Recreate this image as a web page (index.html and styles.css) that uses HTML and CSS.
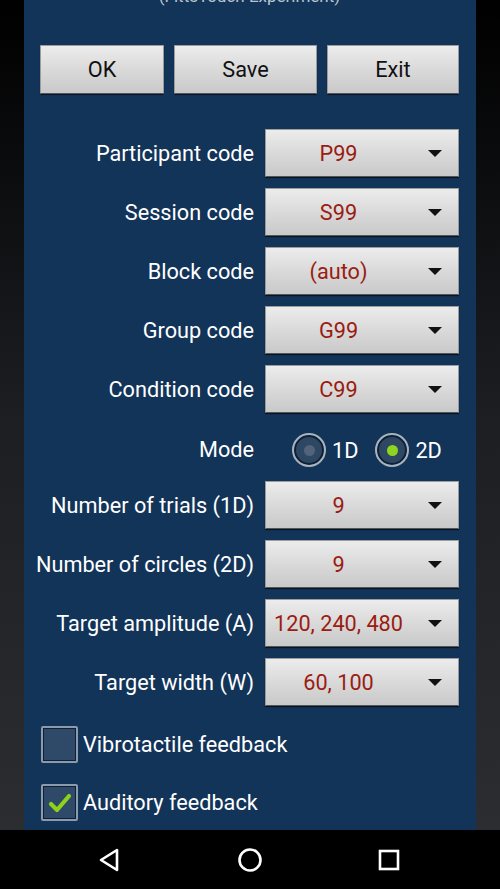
FILE: index.html
```html
<!DOCTYPE html>
<html lang="en">
<head>
    <meta charset="UTF-8">
    <meta name="viewport" content="width=device-width, initial-scale=1.0">
    <title>FittsTouch Setup</title>
    <link rel="stylesheet" href="styles.css">
</head>
<body>

<div class="screen">
    <div class="panel">
        <div class="title">(FittsTouch Experiment)</div>

        <div class="buttons">
            <button class="btn">OK</button>
            <button class="btn">Save</button>
            <button class="btn">Exit</button>
        </div>

        <div class="form">
            <div class="row">
                <span class="label">Participant code</span>
                <div class="spinner"><span class="value">P99</span><span class="arrow"></span></div>
            </div>
            <div class="row">
                <span class="label">Session code</span>
                <div class="spinner"><span class="value">S99</span><span class="arrow"></span></div>
            </div>
            <div class="row">
                <span class="label">Block code</span>
                <div class="spinner"><span class="value">(auto)</span><span class="arrow"></span></div>
            </div>
            <div class="row">
                <span class="label">Group code</span>
                <div class="spinner"><span class="value">G99</span><span class="arrow"></span></div>
            </div>
            <div class="row">
                <span class="label">Condition code</span>
                <div class="spinner"><span class="value">C99</span><span class="arrow"></span></div>
            </div>
            <div class="row mode-row">
                <span class="label">Mode</span>
                <div class="radios">
                    <label class="radio"><span class="ring"><span class="dot"></span></span>1D</label>
                    <label class="radio checked"><span class="ring"><span class="dot"></span></span>2D</label>
                </div>
            </div>
            <div class="row">
                <span class="label">Number of trials (1D)</span>
                <div class="spinner"><span class="value">9</span><span class="arrow"></span></div>
            </div>
            <div class="row">
                <span class="label">Number of circles (2D)</span>
                <div class="spinner"><span class="value">9</span><span class="arrow"></span></div>
            </div>
            <div class="row">
                <span class="label">Target amplitude (A)</span>
                <div class="spinner"><span class="value">120, 240, 480</span><span class="arrow"></span></div>
            </div>
            <div class="row">
                <span class="label">Target width (W)</span>
                <div class="spinner"><span class="value">60, 100</span><span class="arrow"></span></div>
            </div>
        </div>

        <div class="checks">
            <label class="check"><span class="box"></span>Vibrotactile feedback</label>
            <label class="check">
                <span class="box">
                    <svg width="26" height="26" viewBox="0 0 26 26"><path d="M4 14 L10 20 L22 6" fill="none" stroke="#8ed21c" stroke-width="4.2" stroke-linecap="round" stroke-linejoin="round"/></svg>
                </span>Auditory feedback
            </label>
        </div>
    </div>
</div>

<div class="navbar">
    <svg width="24" height="26" viewBox="0 0 24 26"><path d="M19 3 L19 23 L3 13 Z" fill="none" stroke="#fff" stroke-width="2.6" stroke-linejoin="round"/></svg>
    <svg width="26" height="26" viewBox="0 0 26 26"><circle cx="13" cy="13" r="10.5" fill="none" stroke="#fff" stroke-width="2.6"/></svg>
    <svg width="24" height="24" viewBox="0 0 24 24"><rect x="3" y="3" width="18" height="18" fill="none" stroke="#fff" stroke-width="2.6"/></svg>
</div>

</body>
</html>
```

FILE: styles.css
```css
body {
    margin: 0;
    font-family: Roboto, "Noto Sans", sans-serif;
    background: #000;
    overflow: hidden;
}
.screen {
    height: 830px;
    overflow: hidden;
    background: linear-gradient(to bottom, #000 0%, #1c1e22 50%, #2c2d30 100%);
}
.panel {
    width: 452px;
    height: 830px;
    margin: 0 24px;
    background: #133459;
    box-sizing: border-box;
    padding: 0 17px 0 16px;
    overflow: hidden;
}
.title {
    margin-top: -14px;
    height: 20px;
    line-height: 20px;
    text-align: center;
    color: #b9c3ce;
    font-size: 17px;
}
.buttons {
    display: grid;
    grid-template-columns: 124px 143px 132px;
    gap: 10px;
    margin-top: 39px;
}
.btn {
    height: 49px;
    font-family: Roboto, sans-serif;
    font-size: 21.7px;
    color: #111;
    border: 1px solid #9c9c9c;
    border-bottom-color: #555;
    border-radius: 1px;
    background: linear-gradient(to bottom, #ececec, #d8d8d8 55%, #c9c9c9);
    box-shadow: 0 1px 1px rgba(0,0,0,0.6);
    padding: 0;
}
.form {
    margin-top: 35px;
}
.row {
    display: flex;
    align-items: center;
    justify-content: flex-end;
    height: 48px;
    margin-bottom: 11px;
}
.label {
    text-align: right;
    color: #fff;
    font-size: 21.7px;
    margin-right: 11px;
    white-space: nowrap;
}
.spinner {
    flex: 0 0 194px;
    height: 48px;
    box-sizing: border-box;
    display: flex;
    align-items: center;
    border: 1px solid #9c9c9c;
    border-bottom-color: #555;
    background: linear-gradient(to bottom, #ececec, #d8d8d8 55%, #c9c9c9);
    box-shadow: 0 1px 1px rgba(0,0,0,0.6);
}
.value {
    flex: 1;
    text-align: center;
    color: #9a1c12;
    font-size: 21.7px;
}
.arrow {
    width: 0;
    height: 0;
    border-left: 7px solid transparent;
    border-right: 7px solid transparent;
    border-top: 7px solid #111;
    margin: 0 16px 0 17px;
}
.mode-row {
    margin-bottom: 9px;
}
.mode-row .label {
    margin-top: 3px;
}
.radios {
    flex: 0 0 194px;
    box-sizing: border-box;
    padding-left: 27px;
    margin-top: 4px;
    display: flex;
    align-items: center;
    gap: 17px;
}
.radio {
    display: flex;
    align-items: center;
    color: #fff;
    font-size: 21.7px;
}
.radio .ring {
    width: 34px;
    height: 34px;
    box-sizing: border-box;
    border-radius: 50%;
    border: 2px solid #a9b3bd;
    background: #2e4763;
    box-shadow: inset 0 0 0 2px #0d2037;
    display: flex;
    align-items: center;
    justify-content: center;
    margin-right: 6px;
}
.radio .dot {
    width: 11px;
    height: 11px;
    border-radius: 50%;
    background: #52637a;
}
.radio.checked .dot {
    background: #8ed61e;
}
.checks {
    margin-top: 20px;
}
.check {
    display: flex;
    align-items: center;
    color: #fff;
    font-size: 21.7px;
    height: 37px;
    margin-bottom: 21px;
    margin-left: 1px;
}
.check .box {
    width: 37px;
    height: 37px;
    box-sizing: border-box;
    border: 2px solid #8b9bab;
    background: #2f4968;
    box-shadow: inset 0 0 0 1px #0d2037;
    border-radius: 2px;
    margin-right: 5px;
    display: flex;
    align-items: center;
    justify-content: center;
}
.navbar {
    height: 59px;
    background: #000;
    display: flex;
    align-items: center;
    justify-content: space-between;
    padding: 0 99px 0 98px;
}
```
